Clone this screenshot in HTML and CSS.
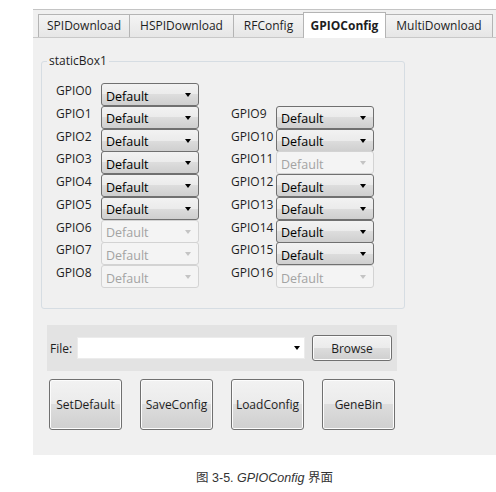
FILE: index.html
```html
<!DOCTYPE html>
<html>
<head>
<meta charset="utf-8">
<link rel="stylesheet" href="styles.css">
</head>
<body>
<div class="window">
  <div class="tabs">
    <div class="tab w1">SPIDownload</div>
    <div class="tab w2">HSPIDownload</div>
    <div class="tab w3">RFConfig</div>
    <div class="tab w4 active">GPIOConfig</div>
    <div class="tab w5">MultiDownload</div>
  </div>
  <div class="panel">
    <div class="staticbox">
      <span class="staticbox-title">staticBox1</span>
      <div class="gpio-grid">
        <div class="gpio-col">
          <div class="gpio-row"><span class="gpio-label">GPIO0</span><div class="combo"><span>Default</span><i class="arrow"></i></div></div>
          <div class="gpio-row"><span class="gpio-label">GPIO1</span><div class="combo"><span>Default</span><i class="arrow"></i></div></div>
          <div class="gpio-row"><span class="gpio-label">GPIO2</span><div class="combo"><span>Default</span><i class="arrow"></i></div></div>
          <div class="gpio-row"><span class="gpio-label">GPIO3</span><div class="combo"><span>Default</span><i class="arrow"></i></div></div>
          <div class="gpio-row"><span class="gpio-label">GPIO4</span><div class="combo"><span>Default</span><i class="arrow"></i></div></div>
          <div class="gpio-row"><span class="gpio-label">GPIO5</span><div class="combo"><span>Default</span><i class="arrow"></i></div></div>
          <div class="gpio-row"><span class="gpio-label">GPIO6</span><div class="combo disabled"><span>Default</span><i class="arrow"></i></div></div>
          <div class="gpio-row"><span class="gpio-label">GPIO7</span><div class="combo disabled"><span>Default</span><i class="arrow"></i></div></div>
          <div class="gpio-row"><span class="gpio-label">GPIO8</span><div class="combo disabled"><span>Default</span><i class="arrow"></i></div></div>
        </div>
        <div class="gpio-col right">
          <div class="gpio-row"><span class="gpio-label">GPIO9</span><div class="combo"><span>Default</span><i class="arrow"></i></div></div>
          <div class="gpio-row"><span class="gpio-label">GPIO10</span><div class="combo"><span>Default</span><i class="arrow"></i></div></div>
          <div class="gpio-row"><span class="gpio-label">GPIO11</span><div class="combo disabled"><span>Default</span><i class="arrow"></i></div></div>
          <div class="gpio-row"><span class="gpio-label">GPIO12</span><div class="combo"><span>Default</span><i class="arrow"></i></div></div>
          <div class="gpio-row"><span class="gpio-label">GPIO13</span><div class="combo"><span>Default</span><i class="arrow"></i></div></div>
          <div class="gpio-row"><span class="gpio-label">GPIO14</span><div class="combo"><span>Default</span><i class="arrow"></i></div></div>
          <div class="gpio-row"><span class="gpio-label">GPIO15</span><div class="combo"><span>Default</span><i class="arrow"></i></div></div>
          <div class="gpio-row"><span class="gpio-label">GPIO16</span><div class="combo disabled"><span>Default</span><i class="arrow"></i></div></div>
        </div>
      </div>
    </div>
    <div class="filebar">
      <span class="file-label">File:</span>
      <div class="file-combo"><i class="arrow"></i></div>
      <div class="btn browse">Browse</div>
    </div>
    <div class="actions">
      <div class="btn big">SetDefault</div>
      <div class="btn big">SaveConfig</div>
      <div class="btn big">LoadConfig</div>
      <div class="btn big">GeneBin</div>
    </div>
  </div>
</div>
<div class="caption">图 3-5. <i>GPIOConfig</i> 界面</div>
</body>
</html>
```

FILE: styles.css
```css
html, body {
  margin: 0;
  padding: 0;
  background: #ffffff;
}
body {
  font-family: "Open Sans", "Noto Sans", sans-serif;
  font-size: 12px;
  color: #1e1e1e;
}
.window {
  margin: 9px 0 0 33px;
  width: 463px;
  height: 446px;
  box-sizing: border-box;
  background: #f0f0f0;
  border-top: 1px solid #c4c4c4;
}
.tabs {
  display: flex;
  align-items: flex-end;
  padding: 4px 0 0 5px;
}
.tab {
  height: 23px;
  box-sizing: border-box;
  border: 1px solid #b4b4b4;
  border-bottom: none;
  margin-right: -1px;
  background: linear-gradient(#f4f4f4, #e6e6e6);
  display: flex;
  align-items: center;
  justify-content: center;
  line-height: 14px;
  color: #1e1e1e;
  white-space: nowrap;
}
.w1 { width: 92px; }
.w2 { width: 105px; }
.w3 { width: 71px; }
.w4 { width: 83px; }
.w5 { width: 108px; }
.tab.active {
  height: 26px;
  margin-top: -2px;
  margin-bottom: -1px;
  background: #ffffff;
  font-weight: 700;
  position: relative;
  z-index: 1;
}
.panel {
  border-top: 1px solid #c8c8c8;
  padding: 0;
}
.staticbox {
  margin: 23px 0 0 8px;
  width: 364px;
  height: 248px;
  box-sizing: border-box;
  border: 1px solid #d6dde3;
  border-radius: 3px;
  padding: 0 0 0 14px;
}
.staticbox-title {
  display: block;
  width: fit-content;
  margin: -8px 0 0 -9px;
  padding: 0 2px;
  background: #f0f0f0;
  line-height: 14px;
}
.gpio-grid {
  display: flex;
  gap: 32px;
  margin-top: 15px;
}
.gpio-col {
  display: flex;
  flex-direction: column;
}
.gpio-col.right {
  padding-top: 22.75px;
}
.gpio-row {
  display: flex;
  height: 22.75px;
}
.gpio-label {
  width: 45px;
  line-height: 14px;
  padding-top: 1px;
  white-space: nowrap;
}
.combo {
  width: 98px;
  height: 23px;
  box-sizing: border-box;
  border: 1px solid #707070;
  border-radius: 3px;
  background: linear-gradient(#f2f2f2 0%, #ebebeb 50%, #dddddd 50%, #cfcfcf 100%);
  display: flex;
  align-items: center;
  justify-content: space-between;
  padding: 3px 7px 0 4px;
  font-size: 12.5px;
  color: #000;
}
.arrow {
  display: block;
  width: 0;
  height: 0;
  border-left: 3.5px solid transparent;
  border-right: 3.5px solid transparent;
  border-top: 4px solid #000;
}
.combo .arrow {
  margin-top: -2px;
}
.combo.disabled {
  border-color: #d3d3d3;
  background: #f4f4f4;
  color: #a3a3a3;
}
.combo.disabled .arrow {
  border-top-color: #c4c4c4;
}
.filebar {
  margin: 16px 0 0 14px;
  width: 350px;
  height: 46px;
  background: #e3e3e3;
  display: flex;
  align-items: center;
  padding-left: 3px;
  box-sizing: border-box;
}
.file-label {
  width: 27px;
  color: #1e1e1e;
}
.file-combo {
  width: 228px;
  height: 22px;
  background: #ffffff;
  box-sizing: border-box;
  border: 1px solid #ececec;
  display: flex;
  align-items: center;
  justify-content: flex-end;
  padding-right: 4px;
  margin-right: 7px;
}
.btn {
  box-sizing: border-box;
  border: 1px solid #707070;
  border-radius: 3px;
  background: linear-gradient(#f2f2f2 0%, #ebebeb 50%, #dddddd 50%, #cfcfcf 100%);
  box-shadow: inset 0 0 0 1px #fcfcfc;
  display: flex;
  align-items: center;
  justify-content: center;
  color: #1e1e1e;
  white-space: nowrap;
}
.browse {
  width: 80px;
  height: 26px;
}
.actions {
  display: flex;
  gap: 18px;
  margin: 8px 0 0 16px;
}
.btn.big {
  width: 73px;
  height: 51px;
}
.caption {
  margin: 16px 0 0 33px;
  width: 463px;
  text-align: center;
  line-height: 14px;
  font-family: "Liberation Sans", "Noto Sans CJK SC", sans-serif;
  font-size: 12.5px;
  color: #333333;
}
```
